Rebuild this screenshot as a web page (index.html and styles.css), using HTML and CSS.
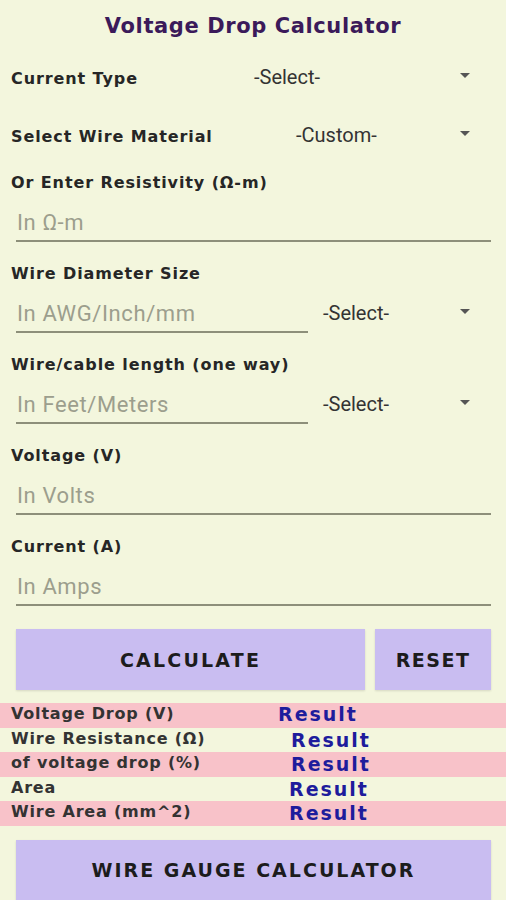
FILE: index.html
```html
<!DOCTYPE html>
<html lang="en">
<head>
  <meta charset="UTF-8">
  <meta name="viewport" content="width=device-width, initial-scale=1.0">
  <title>Voltage Drop Calculator</title>
  <link rel="stylesheet" href="styles.css">
</head>
<body>
  <h1 class="title">Voltage Drop Calculator</h1>

  <div class="select-row">
    <span class="label">Current Type</span>
    <div class="spinner"><span>-Select-</span><i class="arrow"></i></div>
  </div>

  <div class="select-row">
    <span class="label">Select Wire Material</span>
    <div class="spinner spinner-material"><span>-Custom-</span><i class="arrow"></i></div>
  </div>

  <!-- Resistivity -->
  <div class="field first">
    <label class="label" for="resistivity">Or Enter Resistivity (Ω-m)</label>
    <input type="text" id="resistivity" placeholder="In Ω-m">
  </div>

  <div class="field">
    <label class="label" for="diameter">Wire Diameter Size</label>
    <div class="input-row">
      <input type="text" id="diameter" placeholder="In AWG/Inch/mm">
      <div class="spinner"><span>-Select-</span><i class="arrow"></i></div>
    </div>
  </div>

  <div class="field">
    <label class="label" for="length">Wire/cable length (one way)</label>
    <div class="input-row">
      <input type="text" id="length" placeholder="In Feet/Meters">
      <div class="spinner"><span>-Select-</span><i class="arrow"></i></div>
    </div>
  </div>

  <div class="field">
    <label class="label" for="voltage">Voltage (V)</label>
    <input type="text" id="voltage" placeholder="In Volts">
  </div>

  <div class="field">
    <label class="label" for="current">Current (A)</label>
    <input type="text" id="current" placeholder="In Amps">
  </div>

  <div class="buttons">
    <button type="button" class="btn btn-calc">CALCULATE</button>
    <button type="button" class="btn btn-reset">RESET</button>
  </div>

  <!-- Results -->
  <div class="results">
    <div class="result pink"><span class="r-label">Voltage Drop (V)</span><span class="r-value first-value">Result</span></div>
    <div class="result"><span class="r-label">Wire Resistance (Ω)</span><span class="r-value mid-value">Result</span></div>
    <div class="result pink"><span class="r-label">of voltage drop (%)</span><span class="r-value mid-value">Result</span></div>
    <div class="result"><span class="r-label">Area</span><span class="r-value">Result</span></div>
    <div class="result pink"><span class="r-label">Wire Area (mm^2)</span><span class="r-value">Result</span></div>
  </div>

  <button type="button" class="btn btn-gauge">WIRE GAUGE CALCULATOR</button>
</body>
</html>
```

FILE: styles.css
```css
body {
  margin: 0;
  background-color: #f3f6dd;
  font-family: "DejaVu Sans", sans-serif;
  color: #222;
  width: 506px;
  height: 900px;
  overflow: hidden;
}
.title {
  margin: 12px 0 0;
  height: 28px;
  line-height: 28px;
  text-align: center;
  font-size: 21px;
  font-weight: bold;
  letter-spacing: 0.6px;
  color: #3b1a5a;
}
.label {
  display: block;
  font-size: 16px;
  font-weight: bold;
  letter-spacing: 0.9px;
  color: #262626;
  line-height: 20px;
}
.select-row {
  display: flex;
  align-items: center;
  height: 40px;
  padding: 0 36px 0 11px;
  margin-top: 17px;
}
.select-row + .select-row {
  margin-top: 18px;
}
.select-row .label {
  width: 243px;
  flex: none;
  padding-top: 3px;
}
.spinner {
  display: flex;
  align-items: center;
  flex: 1;
  height: 40px;
  font-family: Roboto, sans-serif;
  font-size: 20px;
  color: #333;
}
.spinner-material {
  padding-left: 42px;
}
.arrow {
  margin-left: auto;
  margin-top: -3px;
  width: 0;
  height: 0;
  border-left: 5px solid transparent;
  border-right: 5px solid transparent;
  border-top: 5px solid #555;
}
.field {
  padding: 0 15px 0 11px;
  margin-top: 21px;
}
.field.first {
  margin-top: 17px;
}
.field .label {
  padding-top: 1px;
  margin-bottom: 9px;
}
input {
  display: block;
  box-sizing: border-box;
  width: 475px;
  height: 40px;
  margin-left: 5px;
  padding: 3px 1px 0;
  border: none;
  border-bottom: 2px solid #8d8f7a;
  background: transparent;
  font-family: Roboto, sans-serif;
  font-size: 22px;
  letter-spacing: 0.6px;
  color: #333;
  outline: none;
}
input::placeholder {
  color: #9c9e8d;
}
.input-row {
  display: flex;
  align-items: center;
  padding-right: 21px;
}
.input-row input {
  width: 292px;
  flex: none;
}
.input-row .spinner {
  padding-left: 15px;
}
.buttons {
  display: flex;
  gap: 10px;
  padding: 0 15px 0 16px;
  margin-top: 23px;
}
.btn {
  height: 61px;
  border: none;
  background-color: #c9bdf1;
  font-family: "DejaVu Sans", sans-serif;
  font-size: 19px;
  font-weight: bold;
  letter-spacing: 2.2px;
  color: #1c1c1c;
  box-shadow: 0 1px 2px rgba(0, 0, 0, 0.12);
}
.btn-calc {
  width: 349px;
}
.btn-reset {
  width: 116px;
  letter-spacing: 1.5px;
}
.results {
  margin-top: 13px;
}
.result {
  display: flex;
  align-items: center;
  height: 24.5px;
  padding-left: 11px;
}
.pink {
  background-color: #f8c2c9;
}
.r-label {
  width: 278px;
  flex: none;
  font-size: 16px;
  font-weight: bold;
  letter-spacing: 0.8px;
  color: #333;
  margin-top: -3px;
}
.r-value {
  font-size: 19px;
  font-weight: bold;
  letter-spacing: 2px;
  color: #1e1c9c;
}
.first-value {
  margin-left: -11px;
  margin-top: -2px;
}
.mid-value {
  margin-left: 2px;
}
.btn-gauge {
  display: block;
  width: 475px;
  margin: 14px 0 0 16px;
  letter-spacing: 2px;
}
```
